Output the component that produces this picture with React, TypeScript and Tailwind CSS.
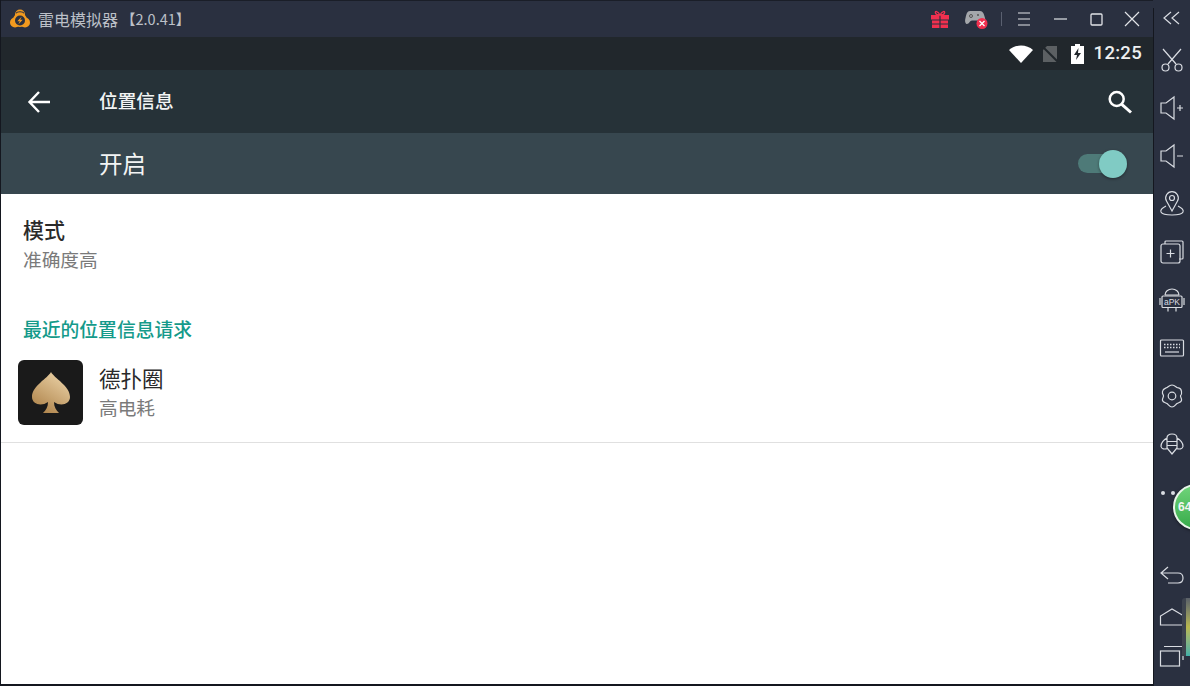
import React from 'react';

const cjk = { fontFamily: '"Noto Sans CJK SC", "Noto Sans", sans-serif' };

function Ico({ children, w = 28, h = 28 }: { children: React.ReactNode; w?: number; h?: number }) {
  return (
    <svg width={w} height={h} viewBox={`0 0 ${w} ${h}`} fill="none" stroke="#d9dce2" strokeWidth="1.2">
      {children}
    </svg>
  );
}

function Logo() {
  return (
    <svg width="22" height="22" viewBox="0 0 22 22">
      <circle cx="11" cy="6.500" r="5" fill="#f29a1f" />
      <circle cx="6" cy="14.500" r="5" fill="#f29a1f" />
      <circle cx="16" cy="14.500" r="5" fill="#f29a1f" />
      <circle cx="11" cy="12" r="7" fill="#f29a1f" />
      <path d="M7 5.200C8 3.200 14 3.200 15 5.200" fill="none" stroke="#2a3040" strokeWidth="1.100" />
      <circle cx="11" cy="12.500" r="5" fill="#2a3040" />
      <path d="M12.800 8.500 8.300 13.200h2.500l-1.500 3.300 4.400-4.800h-2.500z" fill="#f29a1f" />
    </svg>
  );
}

function TitleBar() {
  return (
    <div className="h-[37px] shrink-0 flex items-center bg-[#2a3040] border-t border-[#1a1e28] pl-[8px] pr-[13px]">
      <Logo />
      <span className="ml-[7px] text-[16px] text-[#bcc0c8]" style={cjk}>雷电模拟器</span>
      <span className="ml-[3px] text-[14.500px] text-[#bcc0c8]" style={cjk}>【2.0.41】</span>
      <div className="ml-auto flex items-center">
        <svg width="18" height="18" viewBox="0 0 18 18">
          <path d="M0 5h18v4.500H0zM1 10.500h16V18H1z" fill="#f0304f" />
          <path d="M8.400 5h1.200v13H8.400zM1 13.500h16v1H1z" fill="#2a3040" />
          <path d="M9 5C7 1 3.500 .5 4.500 3.200 5 4.500 7 5 9 5c2 0 4-.5 4.500-1.800C14.500 .5 11 1 9 5z" fill="none" stroke="#f0304f" strokeWidth="1.300" />
        </svg>
        <svg className="ml-[15px]" width="24" height="20" viewBox="0 0 24 20">
          <path d="M6 2h10c3 0 4 3 5 7 .8 3.500 0 6-1.500 6-2 0-3-3.500-5-3.500H8C6 11.500 5 15 3 15 1.500 15 .5 12.500 1.500 9 2.500 5 3 2 6 2z" fill="#a4a7ab" />
          <circle cx="7" cy="7" r="1.500" fill="none" stroke="#555" />
          <circle cx="14" cy="6" r="1" fill="#555" />
          <circle cx="18" cy="14.500" r="5.500" fill="#f0304f" />
          <path d="M15.500 12l5 5M20.500 12l-5 5" stroke="#fff" strokeWidth="1.300" />
        </svg>
        <div className="ml-[13px] w-px h-[14px] bg-[#5a6070]" />
        <svg className="ml-[15px]" width="14" height="16" viewBox="0 0 14 16" stroke="#e2e4e8" strokeWidth="1.200">
          <path d="M1 2h12M1 8h12M1 14h12" />
        </svg>
        <svg className="ml-[23px]" width="13" height="4" viewBox="0 0 13 4" stroke="#e2e4e8" strokeWidth="1.200">
          <path d="M0 2h13" />
        </svg>
        <svg className="ml-[23px]" width="13" height="13" viewBox="0 0 13 13" fill="none" stroke="#e2e4e8" strokeWidth="1.300">
          <rect x="1" y="1" width="11" height="11" rx="1" />
        </svg>
        <svg className="ml-[21px]" width="16" height="16" viewBox="0 0 16 16" stroke="#e2e4e8" strokeWidth="1.200">
          <path d="M1 1l14 14M15 1L1 15" />
        </svg>
      </div>
    </div>
  );
}

function StatusBar() {
  return (
    <div className="h-[33px] shrink-0 flex items-center justify-end bg-[#21272c] pr-[11px]">
      <svg width="24" height="18" viewBox="0 0 24 18">
        <path d="M0 5C6-1 18-1 24 5L12 18z" fill="#fff" />
      </svg>
      <svg className="ml-[9px]" width="16" height="18" viewBox="0 0 16 18">
        <path d="M5 1h10v16H1V5z" fill="#5c6063" />
        <path d="M0 1l16 16" stroke="#21272c" strokeWidth="2" />
      </svg>
      <svg className="ml-[13px]" width="13" height="20" viewBox="0 0 13 20">
        <path d="M4 0h5v2h4v18H0V2h4z" fill="#fff" />
        <path d="M7.500 4 3 11h3l-1 5 5-7H7z" fill="#21272c" />
      </svg>
      <span className="ml-[10px] text-[18.500px] font-medium text-[#eef0f0] tracking-[0.3px]" style={{ fontFamily: 'Roboto, sans-serif' }}>12:25</span>
    </div>
  );
}

function Toolbar() {
  return (
    <div className="h-[63px] shrink-0 flex items-center bg-[#263238] pl-[24px] pr-[19px]">
      <svg width="28" height="28" viewBox="0 0 28 28" fill="none" stroke="#fff" strokeWidth="2.400">
        <path d="M25 14H4.500M14 4 4.500 14 14 24" />
      </svg>
      <span className="ml-[46px] -mt-[2px] text-[18.700px] font-medium text-[#f2f4f4]" style={cjk}>位置信息</span>
      <svg className="ml-auto" width="28" height="28" viewBox="0 0 28 28" fill="none" stroke="#fff">
        <circle cx="10.700" cy="11" r="7" strokeWidth="2.500" />
        <path d="M15.800 16.300 25 24.500" strokeWidth="3" />
      </svg>
    </div>
  );
}

function MasterSwitch() {
  return (
    <div className="h-[61px] shrink-0 flex items-center bg-[#37474f] pl-[98px] pr-[26px]">
      <span className="text-[23.500px] text-[#f2f4f4]" style={cjk}>开启</span>
      <div className="ml-auto relative w-[49px] h-[28px] flex items-center">
        <div className="w-[40px] h-[19px] rounded-full bg-[#4e7a78]" />
        <div className="absolute right-0 top-0 w-[28px] h-[28px] rounded-full bg-[#80cbc4] shadow-[0_1px_3px_rgba(0,0,0,0.4)]" />
      </div>
    </div>
  );
}

function Spade() {
  return (
    <svg width="38" height="41" viewBox="0 0 38 41">
      <defs>
        <linearGradient id="gold" x1="0.800" y1="0" x2="0.200" y2="1">
          <stop offset="0" stopColor="#ecd3a8" />
          <stop offset="1" stopColor="#ad8249" />
        </linearGradient>
      </defs>
      <path d="M19 0C16 6 0 14 0 25c0 7 9 10 16 5 0 5-2 8-5 11h16c-3-3-5-6-5-11 7 5 16 2 16-5C38 14 22 6 19 0z" fill="url(#gold)" />
    </svg>
  );
}

function Content() {
  return (
    <div className="flex-1 bg-white">
      <div className="pl-[22px] pt-[19px]">
        <div className="text-[21px] leading-[32px] font-medium text-[#2a2a2a]" style={cjk}>模式</div>
        <div className="text-[18.700px] leading-[28px] text-[#7a7a7a]" style={cjk}>准确度高</div>
      </div>
      <div className="pl-[22px] mt-[42px] text-[18.800px] leading-[28px] font-medium text-[#149a8a]" style={cjk}>最近的位置信息请求</div>
      <div className="mt-[17px] h-[83px] flex pl-[17px] border-b border-[#e0e0e0]">
        <div className="w-[65px] h-[65px] rounded-[6px] bg-[#1a1a1a] flex items-center justify-center">
          <Spade />
        </div>
        <div className="ml-[16px]">
          <div className="text-[21.500px] leading-[36px] text-[#2a2a2a]" style={cjk}>德扑圈</div>
          <div className="text-[18.700px] leading-[22px] text-[#7a7a7a]" style={cjk}>高电耗</div>
        </div>
      </div>
    </div>
  );
}

function Sidebar() {
  return (
    <div className="relative w-[37px] shrink-0 bg-[#2a3040] flex flex-col items-center pt-[4px] overflow-hidden">
      <div className="absolute left-0 top-[8px] bottom-0 w-px bg-[#14171f]" />
      <div className="h-[28px] flex items-center">
        <Ico w={20} h={14}>
          <path d="M9 1 2 7l7 6M17 1l-7 6 7 6" />
        </Ico>
      </div>
      <div className="mt-[14px] h-[28px] flex items-center">
        <Ico w={24} h={24}>
          <path d="M3 1l13 15M21 1 8 16" />
          <circle cx="5.500" cy="19.500" r="3.500" />
          <circle cx="18.500" cy="19.500" r="3.500" />
        </Ico>
      </div>
      <div className="mt-[20px] h-[28px] flex items-center">
        <Ico w={26} h={26}>
          <path d="M2 8h5l8-6v22l-8-6H2zM18 13h6M21 10v6" />
        </Ico>
      </div>
      <div className="mt-[20px] h-[28px] flex items-center">
        <Ico w={26} h={26}>
          <path d="M2 8h5l8-6v22l-8-6H2zM18 13h6" />
        </Ico>
      </div>
      <div className="mt-[20px] h-[28px] flex items-center">
        <Ico w={26} h={26}>
          <path d="M13 20 7.500 10a6.300 6.300 0 1 1 11 0z" />
          <circle cx="13" cy="7" r="2.500" />
          <path d="M7 15C3 17 1 18.500 2 21c2 4 20 4 22 0 1-2.500-1-4-5-6" />
        </Ico>
      </div>
      <div className="mt-[20px] h-[28px] flex items-center">
        <Ico w={26} h={26}>
          <rect x="2" y="5" width="19" height="19" rx="2" />
          <path d="M6 5V3a1 1 0 0 1 1-1h16a1 1 0 0 1 1 1v16a1 1 0 0 1-1 1h-3M7.500 14.500h8M11.500 10.500v8" />
        </Ico>
      </div>
      <div className="mt-[20px] h-[28px] flex items-center">
        <Ico w={26} h={26}>
          <path d="M6 8a7 6 0 0 1 14 0M6 8h14M1 11v7M25 11v7M9 20.500v4M17 20.500v4" />
          <rect x="3" y="9" width="20" height="11.500" rx="1" />
          <text x="13" y="18" textAnchor="middle" fontSize="8.500" fill="#d9dce2" stroke="none" fontFamily="Liberation Sans, sans-serif">aPK</text>
        </Ico>
      </div>
      <div className="mt-[20px] h-[28px] flex items-center">
        <Ico w={26} h={20}>
          <rect x="1.500" y="2" width="23" height="16" rx="1" />
          <path d="M5 6.500h16M5 9.500h16" strokeDasharray="1.500 1.500" strokeWidth="1.600" />
          <path d="M6 14h14" />
        </Ico>
      </div>
      <div className="mt-[20px] h-[28px] flex items-center">
        <Ico w={26} h={26}>
          <path d="M13 2c2.500 0 3.500 1.500 5 2.500s4-.5 4.500 4-1 3-1 4.500 1.500 2.500 1 4.500-3 2-4.500 3-2.500 3.500-5 3.500-3.500-2.500-5-3.500-4-1-4.500-3 1-3 1-4.500-1.500-1.500-1-4.500 3-3 4.500-4S10.500 2 13 2z" />
          <circle cx="13" cy="13" r="3.800" />
        </Ico>
      </div>
      <div className="mt-[20px] h-[28px] flex items-center">
        <Ico w={26} h={24}>
          <path d="M8 6c0-2.500 2-4 5-4s5 1.500 5 4c3 1.500 6.500 5.500 6 8.500-.5 2.500-3.500 3-6.500 2L13 22l-4.500-5.500C5.500 17.500 2.500 17 2 14.500 1.500 11.500 5 7.500 8 6zM8 6v10M18 6v10M8 9.500h10M8 13.500h10" />
        </Ico>
      </div>
      <div className="mt-[33px] h-[22px] w-full flex items-start pl-[8px] gap-[6px]">
        <span className="w-[4px] h-[4px] rounded-full bg-[#d9dce2]" />
        <span className="w-[4px] h-[4px] rounded-full bg-[#d9dce2]" />
      </div>
      <div className="mt-[49px] h-[28px] flex items-center">
        <Ico w={26} h={22}>
          <path d="M9 2 2 8l7 6M2 8h17c3 0 5 2 5 5s-2 5-5 5H9" />
        </Ico>
      </div>
      <div className="mt-[13px] h-[28px] flex items-center">
        <Ico w={26} h={20}>
          <path d="M1.500 18V9L13 2l12 7v9z" />
        </Ico>
      </div>
      <div className="mt-[11px] h-[28px] flex items-center">
        <Ico w={26} h={24}>
          <rect x="1.500" y="7" width="19" height="15" />
          <path d="M5 2.500h18M24 11v5" />
        </Ico>
      </div>

      <div className="absolute left-[20px] top-[484px] w-[46px] h-[46px] rounded-full bg-gradient-to-b from-[#6fd47a] to-[#36ab4a] border-2 border-[#e8f5e9] flex items-center pl-[3px] shadow-[0_1px_3px_rgba(0,0,0,0.5)]">
        <span className="text-[12px] font-bold text-[#f4f4f4]" style={{ fontFamily: '"Liberation Sans", sans-serif' }}>64</span>
      </div>
      <div className="absolute left-[29px] top-[598px] w-[8px] h-[58px] rounded-tl-[3px] bg-[#3d434e] flex justify-end">
        <div className="w-[4px] h-full bg-gradient-to-b from-[#5a6068] via-[#b8b84e] to-[#3fb0a8]" />
      </div>
    </div>
  );
}

export default function App() {
  return (
    <div className="w-[1190px] h-[686px] flex overflow-hidden bg-[#14171f]">
      <div className="flex-1 flex flex-col border-l border-[#14171f] border-b-2">
        <TitleBar />
        <StatusBar />
        <Toolbar />
        <MasterSwitch />
        <Content />
      </div>
      <Sidebar />
    </div>
  );
}
